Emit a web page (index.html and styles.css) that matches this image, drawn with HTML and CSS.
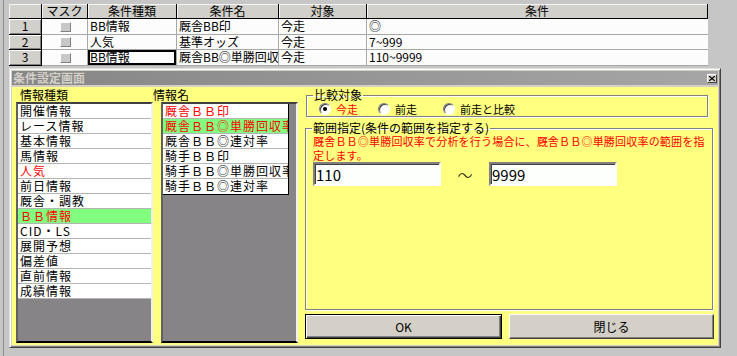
FILE: index.html
```html
<!DOCTYPE html>
<html lang="ja">
<head>
  <meta charset="UTF-8" />
  <title>条件設定</title>
  <link rel="stylesheet" href="styles.css">
</head>
<body>
  <div class="frame">

    <div class="grid">
      <div class="hd"></div>
      <div class="hd">マスク</div>
      <div class="hd">条件種類</div>
      <div class="hd">条件名</div>
      <div class="hd">対象</div>
      <div class="hd hd-last">条件</div>

      <div class="rh">1</div>
      <div class="cell chk"><span class="box"></span></div>
      <div class="cell">BB情報</div>
      <div class="cell">厩舎BB印</div>
      <div class="cell">今走</div>
      <div class="cell last">◎</div>

      <div class="rh">2</div>
      <div class="cell chk"><span class="box"></span></div>
      <div class="cell">人気</div>
      <div class="cell">基準オッズ</div>
      <div class="cell">今走</div>
      <div class="cell last">7~999</div>

      <div class="rh">3</div>
      <div class="cell chk"><span class="box"></span></div>
      <div class="cell focus">BB情報</div>
      <div class="cell">厩舎BB◎単勝回収率</div>
      <div class="cell">今走</div>
      <div class="cell last">110~9999</div>
    </div>

    <div class="dialog">
      <div class="titlebar">
        <span class="title">条件設定画面</span>
        <span class="close">
          <svg width="6" height="5" viewBox="0 0 6 5"><path d="M0 0L6 5M6 0L0 5" stroke="#000" stroke-width="1.2"/></svg>
        </span>
      </div>

      <div class="content">
        <div class="col col-kind">
          <div class="label">情報種類</div>
          <div class="listbox">
            <div class="item">開催情報</div>
            <div class="item">レース情報</div>
            <div class="item">基本情報</div>
            <div class="item">馬情報</div>
            <div class="item red">人気</div>
            <div class="item">前日情報</div>
            <div class="item">厩舎・調教</div>
            <div class="item red sel">ＢＢ情報</div>
            <div class="item">CID・LS</div>
            <div class="item">展開予想</div>
            <div class="item">偏差値</div>
            <div class="item">直前情報</div>
            <div class="item">成績情報</div>
          </div>
        </div>

        <div class="col col-name">
          <div class="label">情報名</div>
          <div class="listbox">
            <div class="items">
              <div class="item red">厩舎ＢＢ印</div>
              <div class="item red sel">厩舎ＢＢ◎単勝回収率</div>
              <div class="item">厩舎ＢＢ◎連対率</div>
              <div class="item">騎手ＢＢ印</div>
              <div class="item">騎手ＢＢ◎単勝回収率</div>
              <div class="item">騎手ＢＢ◎連対率</div>
            </div>
          </div>
        </div>

        <div class="panel">
          <fieldset class="compare">
            <legend>比較対象</legend>
            <div class="opts">
              <label class="opt opt-1"><span class="radio on"></span><span class="red">今走</span></label>
              <label class="opt opt-2"><span class="radio"></span><span>前走</span></label>
              <label class="opt"><span class="radio"></span><span>前走と比較</span></label>
            </div>
          </fieldset>

          <fieldset class="range">
            <legend>範囲指定(条件の範囲を指定する)</legend>
            <div class="desc">厩舎ＢＢ◎単勝回収率で分析を行う場合に、厩舎ＢＢ◎単勝回収率の範囲を指<br>定します。</div>
            <div class="inputs">
              <input type="text" class="num" value="110">
              <span class="tilde">～</span>
              <input type="text" class="num" value="9999">
            </div>
          </fieldset>

          <div class="buttons">
            <button class="btn btn-ok">OK</button>
            <button class="btn btn-close">閉じる</button>
          </div>
        </div>
      </div>
    </div>

  </div>
</body>
</html>
```

FILE: styles.css
```css
* {
  box-sizing: border-box;
}

body {
  margin: 0;
  width: 737px;
  height: 356px;
  overflow: hidden;
  background-color: #c6c6c6;
  font-family: "Noto Sans CJK JP", "Liberation Sans", sans-serif;
  font-size: 12px;
  color: #000;
}

.frame {
  margin-left: 3px;
  height: 356px;
  padding: 4px 0 0 5px;
  border-left: 1px solid #8c8c8c;
}

/* top grid */
.grid {
  display: grid;
  grid-template-columns: 33px 46px 89px 102px 88px 341px;
  grid-template-rows: 15px 16px 15px 16px;
  width: 699px;
}

.grid > div {
  white-space: nowrap;
  line-height: 14px;
}

.hd {
  background-color: #d2d0ca;
  border-right: 1px solid #000;
  border-bottom: 1px solid #000;
  box-shadow: inset 1px 1px #f4f4f4;
  text-align: center;
}

.rh {
  background-color: #d2d0ca;
  border-right: 1px solid #000;
  border-bottom: 1px solid #000;
  box-shadow: inset 1px 1px #fff, inset -1px -1px #808080;
  text-align: center;
}

.cell {
  background-color: #fcfcfc;
  border-right: 1px solid #a8a8a8;
  border-bottom: 1px solid #a8a8a8;
  padding-left: 2px;
  overflow: hidden;
}

.cell.last {
  border-right: none;
}

.cell.focus {
  box-shadow: inset 0 0 0 2px #000;
}

.chk {
  display: flex;
  align-items: center;
  justify-content: center;
}

.chk .box {
  width: 11px;
  height: 10px;
  background-color: #c8c8c8;
  border: 1px solid;
  border-color: #fff #808080 #808080 #fff;
}

/* dialog */
.dialog {
  margin-top: 2px;
  width: 712px;
  height: 280px;
  padding: 2px;
  background-color: #d4d0c8;
  border: 1px solid;
  border-color: #e0e0e0 #404040 #404040 #e0e0e0;
  box-shadow: inset 1px 1px #fff, inset -1px -1px #808080;
}

.titlebar {
  height: 14px;
  margin-bottom: 2px;
  padding-left: 1px;
  display: flex;
  align-items: center;
  justify-content: space-between;
  background: linear-gradient(to right, #868686, #a6a6a6);
}

.title {
  color: #d4d0c8;
  font-weight: bold;
  line-height: 14px;
}

.close {
  width: 10px;
  height: 9px;
  margin-right: 1px;
  display: flex;
  align-items: center;
  justify-content: center;
  background-color: #d4d0c8;
  border: 1px solid;
  border-color: #fff #404040 #404040 #fff;
}

.content {
  height: 258px;
  display: flex;
  padding: 2px 5px 2px 4px;
  background-color: #ffff80;
}

.col {
  display: flex;
  flex-direction: column;
}

.col-kind {
  width: 137px;
}

.col-name {
  width: 145px;
}

.label {
  height: 13px;
  line-height: 12px;
}

.col-kind .label {
  padding-left: 4px;
}

.listbox {
  flex: 1;
  width: 137px;
  overflow: hidden;
  background-color: #868486;
  border: 2px solid;
  border-color: #404040 #f0f0f0 #000 #606060;
}

.col-name .listbox {
  margin-left: 8px;
}

.items {
  width: 126px;
  border-right: 1px solid #000;
  border-bottom: 1px solid #000;
}

.item {
  height: 15px;
  line-height: 14px;
  padding-left: 2px;
  background-color: #fff;
  border-bottom: 1px solid #b4b4b4;
  letter-spacing: 1px;
  white-space: nowrap;
  overflow: hidden;
}

.items .item:last-child {
  border-bottom: none;
}

.red {
  color: #ff0000;
}

.item.sel {
  background-color: #80ff80;
}

/* right panel */
.panel {
  width: 409px;
  margin-left: 7px;
  display: flex;
  flex-direction: column;
  padding-bottom: 4px;
}

fieldset {
  margin: 0;
  padding: 0;
  min-width: 0;
  border: 1px solid #808080;
  box-shadow: 1px 1px #fff, inset 1px 1px #fff;
}

legend {
  margin-left: 6px;
  padding: 0 1px;
  line-height: 12px;
  font-size: 12px;
}

.compare {
  margin: 0 6px 0 1px;
}

.opts {
  display: flex;
  align-items: center;
  height: 14px;
  margin-top: 1px;
  padding-left: 12px;
  font-size: 11px;
}

.opt {
  display: flex;
  align-items: center;
}

.opt-1 {
  width: 59px;
}

.opt-2 {
  width: 65px;
}

.radio {
  width: 12px;
  height: 12px;
  margin-right: 5px;
  border-radius: 50%;
  border: 1px solid;
  border-color: #808080 #fff #fff #808080;
  background-color: #fff;
  box-shadow: inset 1px 1px #404040;
  display: flex;
  align-items: center;
  justify-content: center;
}

.radio.on::after {
  content: "";
  width: 4px;
  height: 4px;
  border-radius: 50%;
  background-color: #000;
}

.range {
  flex: 1;
  margin-top: 5px;
  margin-right: 1px;
}

.desc {
  padding-left: 7px;
  color: #ff0000;
  font-size: 11px;
  line-height: 14px;
  letter-spacing: 0.2px;
  white-space: nowrap;
}

.inputs {
  display: flex;
  align-items: center;
  padding-left: 7px;
}

.num {
  width: 128px;
  height: 24px;
  margin: 0;
  padding: 0 0 0 1px;
  font-family: "Noto Sans CJK JP", "Liberation Sans", sans-serif;
  font-size: 15px;
  color: #000;
  background-color: #fcfffc;
  border: 2px solid;
  border-color: #808080 #fff #fff #808080;
  box-shadow: inset 1px 1px #404040;
  outline: none;
}

.tilde {
  width: 48px;
  text-align: center;
  font-size: 15px;
  font-weight: 300;
}

.buttons {
  display: flex;
  margin-top: 4px;
}

.btn {
  height: 25px;
  padding: 0;
  font-family: "Noto Sans CJK JP", "Liberation Sans", sans-serif;
  font-size: 12px;
  color: #000;
  background-color: #d4d0c8;
  cursor: pointer;
}

.btn-ok {
  width: 197px;
  margin-right: 7px;
  border: 1px solid #000;
  box-shadow: inset 1px 1px #fff, inset -1px -1px #404040, inset -2px -2px #808080;
}

.btn-close {
  width: 205px;
  border: 1px solid;
  border-color: #fff #404040 #404040 #fff;
  box-shadow: inset -1px -1px #808080;
}
```
